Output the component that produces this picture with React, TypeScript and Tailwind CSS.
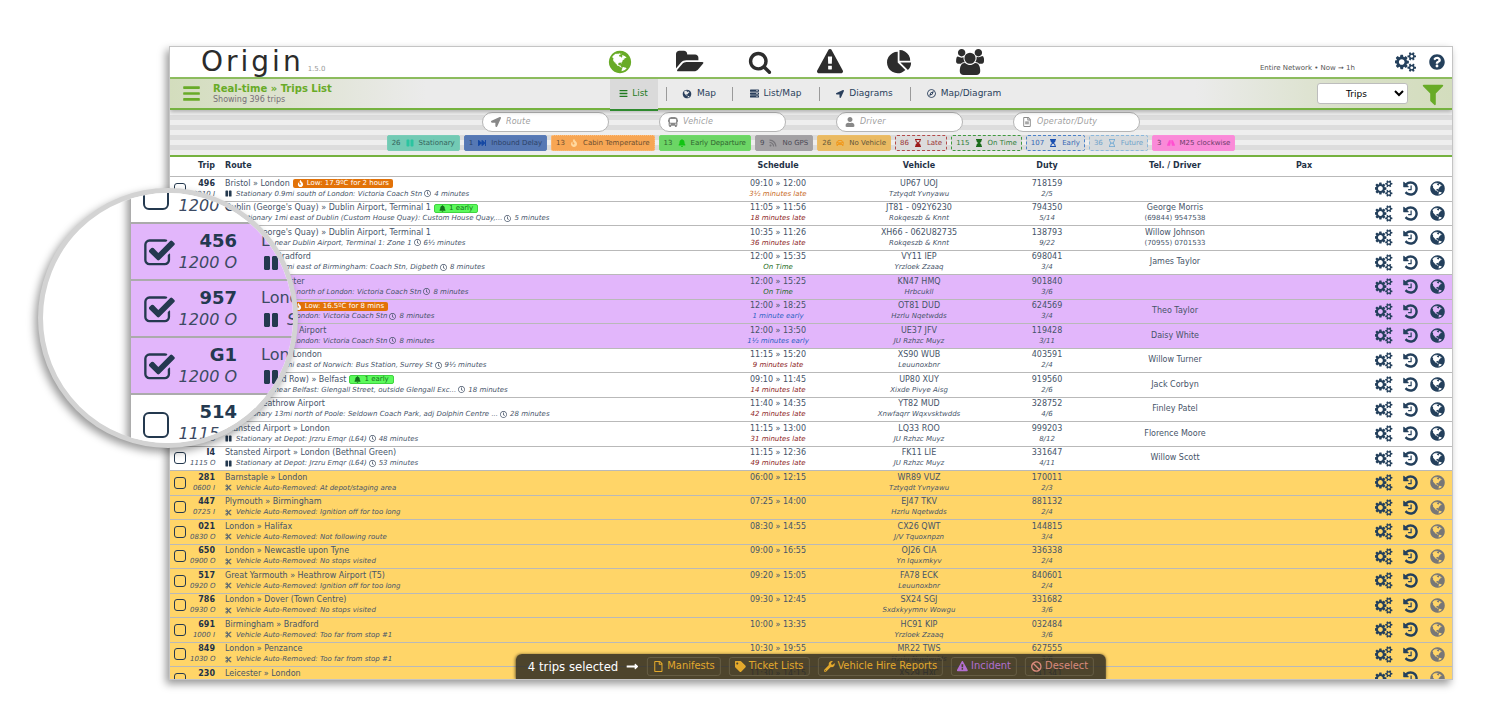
import React from "react";
import {
  FaBars, FaBan, FaBell, FaBus, FaCar, FaCut, FaFastForward, FaFire, FaHourglass, FaHourglassEnd,
  FaHourglassStart, FaLocationArrow, FaLongArrowAltRight, FaPause, FaQuestionCircle, FaRegClock,
  FaRegCompass, FaRegFile, FaRegFileAlt, FaRegHourglass, FaRoad, FaRss, FaServer, FaTag, FaUser, FaWrench,
} from "react-icons/fa";

const PATHS = {
  globe:
    "M896 128q209 0 385.500 103t279.500 279.500 103 385.500-103 385.500-279.500 279.500-385.500 103-385.500-103-279.500-279.500-103-385.500 103-385.500 279.500-279.500 385.500-103zm274 521q-2 1-9.500 9.500t-13.500 9.500q2 0 4.500-5t5-11 3.500-7q6-7 22-15 14-6 52-12 34-8 51 11-2-2 9.500-13t14.500-12q3-2 15-4.500t15-7.500l2-22q-12 1-17.500-7t-6.500-21q0 2-6 8 0-7-4.500-8t-11.500 1-9 1q-10-3-15-7.500t-8-16.500-4-15q-2-5-9.500-11t-9.500-10q-1-2-2.500-5.500t-3-6.500-4-5.500-5.500-2.500-7 5-7.500 10-4.500 5q-3-2-6-1.500t-4.500 1-4.500 3-5 3.500q-3 2-8.500 3t-8.500 2q15-5-1-11-10-4-16-3 9-4 7.500-12t-8.500-14h5q-1-4-8.500-8.500t-17.500-8.500-13-6q-8-5-34-9.500t-33-.5q-5 6-4.500 10.500t4 14 3.500 12.500q1 6-5.500 13t-6.500 12q0 7 14 15.500t10 21.500q-3 8-16 16t-16 12q-5 8-1.500 18.500t10.500 16.500q2 2 1.500 4t-3.500 4.500-5.500 4-6.500 3.500l-3 2q-11 5-20.500-6t-13.500-26q-7-25-16-30-23-8-29 1-5-13-41-26-25-9-58-4 6-1 0-15-7-15-19-12 3-6 4-17.500t1-13.500q3-13 12-23 1-1 7-8.500t9.500-13.500.5-6q35 4 50-11 5-5 11.500-17t10.500-17q9-6 14-5.500t14.500 5.500 14.500 5q14 1 15.500-11t-7.500-20q12 1 3-17-4-7-8-9-12-4-27 5-8 4 2 8-1-1-9.500 10.500t-16.500 17.500-16-5q-1-1-5.500-13.500t-9.500-13.500q-8 0-16 15 3-8-11-15t-24-8q19-12-8-27-7-4-20.500-5t-19.500 4q-5 7-5.500 11.500t5 8 10.500 5.500 11.500 4 8.500 3q14 10 8 14-2 1-8.500 3.500t-11.500 4.500-6 4q-3 4 0 14t-2 14q-5-5-9-17.500t-7-16.500q7 9-25 6l-10-1q-4 0-16 2t-20.500 1-13.500-8q-4-8 0-20 1-4 4-2-4-3-11-9.500t-10-8.500q-46 15-94 41 6 1 12-1 5-2 13-6.500t10-5.500q34-14 42-7l5-5q14 16 20 25-7-4-30-1-20 6-22 12 7 12 5 18-4-3-11.500-10t-14.500-11-15-5q-16 0-22 1-146 80-235 222 7 7 12 8 4 1 5 9t2.500 11 11.500-3q9 8 3 19 1-1 44 27 19 17 21 21 3 11-10 18-1-2-9-9t-9-4q-3 5 .5 18.500t10.500 12.500q-7 0-9.500 16t-2.500 35.500-1 23.500l2 1q-3 12 5.500 34.500t21.500 19.500q-13 3 20 43 6 8 8 9 3 2 12 7.500t15 10 10 10.500q4 5 10 22.500t14 23.500q-2 6 9.500 20t10.500 23q-1 0-2.500 1t-2.500 1q3 7 15.500 14t15.500 13q1 3 2 10t3 11 8 2q2-20-24-62-15-25-17-29-3-5-5.500-15.500t-4.500-14.500q2 0 6 1.500t8.500 3.500 7.500 4 2 3q-3 7 2 17.500t12 18.500 17 19 12 13q6 6 14 19.500t0 13.500q9 0 20 10.500t17 19.500q5 8 8 26t5 24q2 7 8.500 13.500t12.500 9.500l16 8 13 7q5 2 18.500 10.500t21.500 11.500q10 4 16 4t14.500-2.500 13.500-3.500q15-2 29 15t21 21q36 19 55 11-2 1 .5 7.500t8 15.500 9 14.500 5.500 8.500q5 6 18 15t18 15q6-4 7-9-3 8 7 20t18 10q14-3 14-32-31 15-49-18 0-1-2.500-5.500t-4-8.500-2.500-8.500 0-7.500 5-3q9 0 10-3.500t-2-12.500-4-13q-1-8-11-20t-12-15q-5 9-16 8t-16-9q0 1-1.500 5.500t-1.500 6.500q-13 0-15-1 1-3 2.500-17.500t3.500-22.500q1-4 5.500-12t7.500-14.500 4-12.500-4.500-9.500-17.500-2.500q-19 1-26 20-1 3-3 10.500t-5 11.500-9 7q-7 3-24 2t-24-5q-13-8-22.500-29t-9.500-37q0-10 2.500-26.500t3-25-5.500-24.500q3-2 9-9.500t10-10.500q2-1 4.500-1.500t4.500 0 4-1.500 3-6q-1-1-4-3-3-3-4-3 7 3 28.500-1.500t27.500 1.500q15 11 22-2 0-1-2.500-9.500t-.5-13.500q5 27 29 9 3 3 15.500 5t17.500 5q3 2 7 5.500t5.500 4.500 5-.5 8.500-6.500q10 14 12 24 11 40 19 44 7 3 11 2t4.500-9.500 0-14-1.500-12.500l-1-8v-18l-1-8q-15-3-18.500-12t1.500-18.500 15-18.500q1-1 8-3.500t15.500-6.500 12.500-8q21-19 15-35 7 0 11-9-1 0-5-3t-7.500-5-4.500-2q9-5 2-16 5-3 7.500-11t7.500-10q9 12 21 2 8-8 1-16 5-7 20.500-10.500t18.500-9.500q7 2 8-2t1-12 3-12q4-5 15-9t13-5l17-11q3-4 0-4 18 2 31-11 10-11-6-20 3-6-3-9.500t-15-5.500q3-1 11.500-.5t10.500-1.500q15-10-7-16-17-5-43 12zm-163 877q206-36 351-189-3-3-12.500-4.500t-12.500-3.500q-18-7-24-8 1-7-2.500-13t-8-9-12.500-8-11-7q-2-2-7-6t-7-5.500-7.500-4.500-8.500-2-10 1l-3 1q-3 1-5.500 2.500t-5.500 3-4 3 0 2.500q-21-17-36-22-5-1-11-5.500t-10.500-7-10-1.500-11.500 7q-5 5-6 15t-2 13q-7-5 0-17.500t2-18.500q-3-6-10.500-4.500t-12 4.500-11.500 8.500-9 6.500-8.500 5.500-8.500 7.500q-3 4-6 12t-5 11q-2-4-11.500-6.500t-9.500-5.500q2 10 4 35t5 38q7 31-12 48-27 25-29 40-4 22 12 26 0 7-8 20.500t-7 21.500q0 6 2 16z",
  cogs:
    "M832 896q0-106-75-181t-181-75-181 75-75 181 75 181 181 75 181-75 75-181zm768 512q0-52-38-90t-90-38-90 38-38 90q0 53 37.500 90.500t90.500 37.500 90.500-37.500 37.500-90.500zm0-1024q0-52-38-90t-90-38-90 38-38 90q0 53 37.500 90.500t90.500 37.500 90.500-37.500 37.500-90.500zm-384 421v185q0 10-7 19.500t-16 10.500l-155 24q-11 35-32 76 34 48 90 115 7 11 7 20 0 12-7 19-23 30-82.500 89.500t-78.500 59.500q-11 0-21-7l-115-90q-37 19-77 31-11 108-23 155-7 24-30 24h-186q-11 0-20-7.500t-10-17.500l-23-153q-34-10-75-31l-118 89q-7 7-20 7-11 0-21-8-144-133-144-160 0-9 7-19 10-14 41-53t47-61q-23-44-35-82l-152-24q-10-1-17-9.500t-7-19.500v-185q0-10 7-19.500t16-10.500l155-24q11-35 32-76-34-48-90-115-7-11-7-20 0-12 7-20 22-30 82-89t79-59q11 0 21 7l115 90q34-18 77-32 11-108 23-154 7-24 30-24h186q11 0 20 7.500t10 17.500l23 153q34 10 75 31l118-89q8-7 20-7 11 0 21 8 144 133 144 160 0 8-7 19-12 16-42 54t-45 60q23 48 34 82l152 23q10 2 17 10.500t7 19.500zm640 533v140q0 16-149 31-12 27-30 52 51 113 51 138 0 4-4 7-122 71-124 71-8 0-46-47t-52-68q-20 2-30 2t-30-2q-14 21-52 68t-46 47q-2 0-124-71-4-3-4-7 0-25 51-138-18-25-30-52-149-15-149-31v-140q0-16 149-31 13-29 30-52-51-113-51-138 0-4 4-7 4-2 35-20t59-34 30-16q8 0 46 46.500t52 67.500q20-2 30-2t30 2q51-71 92-112l6-2q4 0 124 70 4 3 4 7 0 25-51 138 17 23 30 52 149 15 149 31zm0-1024v140q0 16-149 31-12 27-30 52 51 113 51 138 0 4-4 7-122 71-124 71-8 0-46-47t-52-68q-20 2-30 2t-30-2q-14 21-52 68t-46 47q-2 0-124-71-4-3-4-7 0-25 51-138-18-25-30-52-149-15-149-31v-140q0-16 149-31 13-29 30-52-51-113-51-138 0-4 4-7 4-2 35-20t59-34 30-16q8 0 46 46.500t52 67.500q20-2 30-2t30 2q51-71 92-112l6-2q4 0 124 70 4 3 4 7 0 25-51 138 17 23 30 52 149 15 149 31z",
  history:
    "M1664 896q0 156-61 298t-164 245-245 164-298 61q-172 0-327-72.500t-264-204.500q-7-10-6.500-22.500t8.500-20.500l137-138q10-9 25-9 16 2 23 12 73 95 179 147t225 52q104 0 198.500-40.500t163.500-109.500 109.500-163.500 40.500-198.500-40.500-198.500-109.500-163.500-163.500-109.500-198.500-40.500q-98 0-188 35.500t-160 101.500l137 138q31 30 14 69-17 40-59 40h-448q-26 0-45-19t-19-45v-448q0-42 40-59 39-17 69 14l130 129q107-101 244.500-156.500t284.500-55.500q156 0 298 61t245 164 164 245 61 298zm-640-288v448q0 14-9 23t-23 9h-320q-14 0-23-9t-9-23v-64q0-14 9-23t23-9h224v-352q0-14 9-23t23-9h64q14 0 23 9t9 23z",
  folder:
    "M1879 952q0 31-31 66l-336 396q-43 51-120.500 86.500t-143.500 35.500h-1088q-34 0-60.500-13t-26.500-43q0-31 31-66l336-396q43-51 120.500-86.500t143.500-35.500h1088q34 0 60.500 13t26.500 43zm-343-344v160h-832q-94 0-197 47.500t-164 119.500l-337 396-5 6q0-4-.5-12.500t-.5-12.500v-960q0-92 66-158t158-66h320q92 0 158 66t66 158v32h544q92 0 158 66t66 158z",
  search:
    "M1216 832q0-185-131.500-316.500t-316.500-131.500-316.500 131.500-131.500 316.500 131.500 316.500 316.500 131.500 316.500-131.500 131.500-316.500zm512 832q0 52-38 90t-90 38q-54 0-90-38l-343-342q-179 124-399 124-143 0-273.500-55.500t-225-150-150-225-55.500-273.500 55.500-273.500 150-225 225-150 273.500-55.500 273.500 55.500 225 150 150 225 55.500 273.500q0 220-124 399l343 343q37 37 37 90z",
  warning:
    "M1024 1375v-190q0-14-9.500-23.500t-22.500-9.500h-192q-13 0-22.500 9.500t-9.500 23.500v190q0 14 9.500 23.500t22.500 9.500h192q13 0 22.500-9.500t9.500-23.500zm-2-374l18-459q0-12-10-19-13-11-24-11h-220q-11 0-24 11-10 7-10 21l17 457q0 10 10 16.500t24 6.500h185q14 0 23.500-6.500t10.500-16.500zm-14-934l768 1408q35 63-2 126-17 29-46.500 46t-63.500 17h-1536q-34 0-63.500-17t-46.500-46q-37-63-2-126l768-1408q17-31 47-49t65-18 65 18 47 49z",
  pie:
    "M768 890l546 546q-106 108-247.500 168t-298.500 60q-209 0-385.500-103t-279.500-279.500-103-385.500 103-385.500 279.500-279.500 385.500-103v762zm187 6h773q0 157-60 298.500t-168 247.500zm709-128h-768v-768q209 0 385.500 103t279.500 279.500 103 385.500z",
  users:
    "M593 896q-162 5-265 128h-134q-82 0-138-40.500t-56-118.500q0-353 124-353 6 0 43.500 21t97.500 42.500 119 21.500q67 0 133-23-5 37-5 66 0 159 93 293zm1071 637q0 120-73 189.500t-194 69.500h-874q-121 0-194-69.500t-73-189.500q0-53 3.500-103.500t14-109 26.500-108.500 43-97.500 62-81 85.500-53.500 111.500-20q10 0 43 21.500t73 48 107 48 135 21.500 135-21.500 107-48 73-48 43-21.500q61 0 111.500 20t85.500 53.500 62 81 43 97.500 26.500 108.500 14 109 3.500 103.500zm-1024-1277q0 106-75 181t-181 75-181-75-75-181 75-181 181-75 181 75 75 181zm704 384q0 159-112.500 271.500t-271.500 112.500-271.500-112.500-112.500-271.500 112.500-271.500 271.500-112.500 271.500 112.500 112.500 271.500zm576 225q0 78-56 118.500t-138 40.500h-134q-103-123-265-128 93-134 93-293 0-29-5-66 66 23 133 23 59 0 119-21.500t97.500-42.500 43.500-21q124 0 124 353zm-128-609q0 106-75 181t-181 75-181-75-75-181 75-181 181-75 181 75 75 181z",
  filter:
    "M1595 295q17 41-14 70l-493 493v742q0 42-39 59-13 5-25 5-27 0-45-19l-256-256q-19-19-19-45v-486l-493-493q-31-29-14-70 17-39 59-39h1280q42 0 59 39z",
  checked:
    "M1472 930v318q0 119-84.500 203.500t-203.500 84.500h-832q-119 0-203.500-84.500t-84.500-203.500v-832q0-119 84.500-203.500t203.500-84.500h832q63 0 117 25 15 7 18 23 3 17-9 29l-49 49q-10 10-23 10-3 0-9-2-23-6-45-6h-832q-66 0-113 47t-47 113v832q0 66 47 113t113 47h832q66 0 113-47t47-113v-254q0-13 9-22l64-64q10-10 23-10 6 0 12 3 20 8 20 29zm231-489l-814 814q-24 24-57 24t-57-24l-430-430q-24-24-24-57t24-57l110-110q24-24 57-24t57 24l263 263 647-647q24-24 57-24t57 24l110 110q24 24 24 57t-24 57z",
};

type IconName = keyof typeof PATHS;

function Icon({ name, wide, className }: { name: IconName; wide?: boolean; className: string }) {
  return (
    <svg viewBox={wide ? "0 0 1920 1792" : "0 0 1792 1792"} fill="currentColor" aria-hidden="true" className={className}>
      <path d={PATHS[name]} />
    </svg>
  );
}

type Kind = "plain" | "picked" | "removed";
type Row = {
  kind: Kind;
  trip: string;
  dep: string;
  route: string;
  low?: string;
  early?: string;
  note: string;
  wait?: string;
  time: string;
  status?: string;
  tone?: string;
  reg: string;
  operator: string;
  duty: string;
  seq: string;
  driver?: string;
  tel?: string;
};

const LATE = "text-[#8b1a1a]";
const ONTIME = "text-[#1c6b1c]";
const EARLY = "text-[#2a62c4]";

const ROWS: Row[] = [
  { kind: "plain", trip: "496", dep: "0910 I", route: "Bristol » London", low: "Low: 17.9ºC for 2 hours", note: "Stationary 0.9mi south of London: Victoria Coach Stn", wait: "4 minutes", time: "09:10 » 12:00", status: "3½ minutes late", tone: "text-[#c8691c]", reg: "UP67 UOJ", operator: "Tztyqdt Yvnyawu", duty: "718159", seq: "2/5" },
  { kind: "plain", trip: "784", dep: "1105 O", route: "Dublin (George's Quay) » Dublin Airport, Terminal 1", early: "1 early", note: "Stationary 1mi east of Dublin (Custom House Quay): Custom House Quay,...", wait: "5 minutes", time: "11:05 » 11:56", status: "18 minutes late", tone: LATE, reg: "JT81 - 092Y6230", operator: "Rokqeszb & Knnt", duty: "794350", seq: "5/14", driver: "George Morris", tel: "(69844) 9547538" },
  { kind: "plain", trip: "784", dep: "1035 O", route: "Dublin (George's Quay) » Dublin Airport, Terminal 1", note: "Stationary near Dublin Airport, Terminal 1: Zone 1", wait: "6½ minutes", time: "10:35 » 11:26", status: "36 minutes late", tone: LATE, reg: "XH66 - 062U82735", operator: "Rokqeszb & Knnt", duty: "138793", seq: "9/22", driver: "Willow Johnson", tel: "(70955) 0701533" },
  { kind: "plain", trip: "310", dep: "1200 O", route: "Newcastle » Bradford", note: "Stationary 0.5mi east of Birmingham: Coach Stn, Digbeth", wait: "8 minutes", time: "12:00 » 15:35", status: "On Time", tone: ONTIME, reg: "VY11 IEP", operator: "Yrzloek Zzaaq", duty: "698041", seq: "3/4", driver: "James Taylor" },
  { kind: "picked", trip: "456", dep: "1200 O", route: "London » Worcester", note: "Stationary 0.9mi north of London: Victoria Coach Stn", wait: "8 minutes", time: "12:00 » 15:25", status: "On Time", tone: ONTIME, reg: "KN47 HMQ", operator: "Hrbcukll", duty: "901840", seq: "3/6" },
  { kind: "picked", trip: "957", dep: "1200 O", route: "London » Leeds", low: "Low: 16.5ºC for 8 mins", note: "Stationary near London: Victoria Coach Stn", wait: "8 minutes", time: "12:00 » 18:25", status: "1 minute early", tone: EARLY, reg: "OT81 DUD", operator: "Hzrlu Nqetwdds", duty: "624569", seq: "3/4", driver: "Theo Taylor" },
  { kind: "picked", trip: "G1", dep: "1200 O", route: "London » Gatwick Airport", note: "Stationary near London: Victoria Coach Stn", wait: "8 minutes", time: "12:00 » 13:50", status: "1½ minutes early", tone: EARLY, reg: "UE37 JFV", operator: "JU Rzhzc Muyz", duty: "119428", seq: "3/11", driver: "Daisy White" },
  { kind: "plain", trip: "514", dep: "1115 O", route: "Norwich (UEA) » London", note: "Stationary 0.5mi east of Norwich: Bus Station, Surrey St", wait: "9½ minutes", time: "11:15 » 15:20", status: "9 minutes late", tone: LATE, reg: "XS90 WUB", operator: "Leuunoxbnr", duty: "403591", seq: "2/4", driver: "Willow Turner" },
  { kind: "plain", trip: "X1", dep: "0910 O", route: "London (Strand Row) » Belfast", early: "1 early", note: "Stationary near Belfast: Glengall Street, outside Glengall Exc...", wait: "18 minutes", time: "09:10 » 11:45", status: "14 minutes late", tone: LATE, reg: "UP80 XUY", operator: "Xixde Pivye Aisg", duty: "919560", seq: "2/6", driver: "Jack Corbyn" },
  { kind: "plain", trip: "205", dep: "1140 O", route: "Poole » Heathrow Airport", note: "Stationary 13mi north of Poole: Seldown Coach Park, adj Dolphin Centre ...", wait: "28 minutes", time: "11:40 » 14:35", status: "42 minutes late", tone: LATE, reg: "YT82 MUD", operator: "Xnwfaqrr Wqxvsktwdds", duty: "328752", seq: "4/6", driver: "Finley Patel" },
  { kind: "plain", trip: "A6", dep: "1115 O", route: "Stansted Airport » London", note: "Stationary at Depot: Jrzru Emqr (L64)", wait: "48 minutes", time: "11:15 » 13:00", status: "31 minutes late", tone: LATE, reg: "LQ33 ROO", operator: "JU Rzhzc Muyz", duty: "999203", seq: "8/12", driver: "Florence Moore" },
  { kind: "plain", trip: "I4", dep: "1115 O", route: "Stansted Airport » London (Bethnal Green)", note: "Stationary at Depot: Jrzru Emqr (L64)", wait: "53 minutes", time: "11:15 » 12:36", status: "49 minutes late", tone: LATE, reg: "FK11 LIE", operator: "JU Rzhzc Muyz", duty: "331647", seq: "4/11", driver: "Willow Scott" },
  { kind: "removed", trip: "281", dep: "0600 I", route: "Barnstaple » London", note: "Vehicle Auto-Removed: At depot/staging area", time: "06:00 » 12:15", reg: "WR89 VUZ", operator: "Tztyqdt Yvnyawu", duty: "170011", seq: "2/3" },
  { kind: "removed", trip: "447", dep: "0725 I", route: "Plymouth » Birmingham", note: "Vehicle Auto-Removed: Ignition off for too long", time: "07:25 » 14:00", reg: "EJ47 TKV", operator: "Hzrlu Nqetwdds", duty: "881132", seq: "2/4" },
  { kind: "removed", trip: "021", dep: "0830 O", route: "London » Halifax", note: "Vehicle Auto-Removed: Not following route", time: "08:30 » 14:55", reg: "CX26 QWT", operator: "J/V Tquoxnpzn", duty: "144815", seq: "3/4" },
  { kind: "removed", trip: "650", dep: "0900 O", route: "London » Newcastle upon Tyne", note: "Vehicle Auto-Removed: No stops visited", time: "09:00 » 16:55", reg: "OJ26 CIA", operator: "Yn Iquxmkyv", duty: "336338", seq: "2/4" },
  { kind: "removed", trip: "517", dep: "0920 O", route: "Great Yarmouth » Heathrow Airport (T5)", note: "Vehicle Auto-Removed: Ignition off for too long", time: "09:20 » 15:05", reg: "FA78 ECK", operator: "Leuunoxbnr", duty: "840601", seq: "2/4" },
  { kind: "removed", trip: "786", dep: "0930 O", route: "London » Dover (Town Centre)", note: "Vehicle Auto-Removed: No stops visited", time: "09:30 » 12:45", reg: "SX24 SGJ", operator: "Sxdxkyymnv Wowgu", duty: "331682", seq: "3/6" },
  { kind: "removed", trip: "691", dep: "1000 I", route: "Birmingham » Bradford", note: "Vehicle Auto-Removed: Too far from stop #1", time: "10:00 » 13:35", reg: "HC91 KIP", operator: "Yrzloek Zzaaq", duty: "032484", seq: "3/6" },
  { kind: "removed", trip: "849", dep: "1030 O", route: "London » Penzance", note: "Vehicle Auto-Removed: Too far from stop #1", time: "10:30 » 19:55", reg: "MR22 TWS", operator: "Hzrlu Nqetwdds", duty: "627555", seq: "3/6" },
  { kind: "removed", trip: "230", dep: "1130 O", route: "Leicester » London", note: "Vehicle Auto-Removed: No stops visited", time: "11:30 » 14:15", reg: "XS29 HXC", operator: "JU Rzhzc Muyz", duty: "341341", seq: "2/4" },
];

const ROW_BG: Record<Kind, string> = { plain: "bg-white", picked: "bg-[#e2b6fb]", removed: "bg-[#ffd568]" };

function TripRow({ row }: { row: Row }) {
  return (
    <tr className={`border-t border-[#b9b9b9] odd:h-[25px] even:h-6 ${ROW_BG[row.kind]}`}>
      <td className="p-0 pl-1 align-middle">
        <input
          type="checkbox"
          defaultChecked={row.kind === "picked"}
          aria-label={`Select trip ${row.trip}`}
          className="block size-3 appearance-none rounded-[3px] border border-[#24394f]"
        />
      </td>
      <td className="overflow-visible p-0 pr-[5px] text-right">
        <div className="font-bold text-[#1f3247]">{row.trip}</div>
        <div className="text-[7px] italic">{row.dep}</div>
      </td>
      <td className="p-0 pl-[5px]">
        <div className="flex items-center gap-[3px]">
          {row.route}
          {row.low && (
            <span className="flex h-[9px] items-center gap-[3px] rounded-[2px] bg-[#e27208] px-1 text-[7px] leading-[9px] text-white">
              <FaFire />
              {row.low}
            </span>
          )}
          {row.early && (
            <span className="flex h-[9px] items-center gap-[3px] rounded-[2px] border border-[#3fd43f] bg-[#5cfa5c] px-1 text-[7px] leading-[9px] text-[#12701a]">
              <FaBell />
              {row.early}
            </span>
          )}
        </div>
        <div className="flex items-center gap-1 text-[7px] italic">
          {row.kind === "removed" ? <FaCut className="text-[#5f6a70]" /> : <FaPause className="text-[#24394f]" />}
          <span>{row.note}</span>
          {row.wait && (
            <span className="-ml-[2px] flex items-center gap-[3px]">
              <FaRegClock />
              {row.wait}
            </span>
          )}
        </div>
      </td>
      <td className="p-0 text-center">
        <div>{row.time}</div>
        <div className={`min-h-[10px] text-[7px] italic ${row.tone ?? ""}`}>{row.status}</div>
      </td>
      <td className="p-0 text-center">
        <div>{row.reg}</div>
        <div className="text-[7px] italic">{row.operator}</div>
      </td>
      <td className="p-0 text-center">
        <div>{row.duty}</div>
        <div className="text-[7px] italic">{row.seq}</div>
      </td>
      <td className="p-0 text-center">
        <div>{row.driver}</div>
        <div className="text-[7px]">{row.tel}</div>
      </td>
      <td className="p-0" />
      <td className="p-0 pr-[6px]">
        <div className="flex items-center justify-end text-[#24405c]">
          <button aria-label="Trip settings">
            <Icon name="cogs" wide className="h-[17px] w-[18px]" />
          </button>
          <button aria-label="Trip history" className="ml-[9px]">
            <Icon name="history" className="size-[17px]" />
          </button>
          <button aria-label="Show on map" className={row.kind === "removed" ? "ml-[10px] text-[#777777]" : "ml-[10px]"}>
            <Icon name="globe" className="size-[17px]" />
          </button>
        </div>
      </td>
    </tr>
  );
}

const SECTIONS: { name: IconName; label: string; className: string; wide?: boolean }[] = [
  { name: "globe", label: "Real-time", className: "size-[26px] text-[#68ab27]" },
  { name: "folder", label: "Files", className: "h-7 w-[28px]", wide: true },
  { name: "search", label: "Search", className: "size-[24px]" },
  { name: "warning", label: "Incidents", className: "size-[26px]" },
  { name: "pie", label: "Reports", className: "size-[25px]" },
  { name: "users", label: "People", className: "h-[26px] w-[28px]", wide: true },
];

const VIEWS = [
  { label: "Map", icon: <Icon name="globe" className="size-[10px]" />, width: "w-[66px]" },
  { label: "List/Map", icon: <FaServer />, width: "w-[87px]" },
  { label: "Diagrams", icon: <FaLocationArrow className="size-2" />, width: "w-[91px]" },
  { label: "Map/Diagram", icon: <FaRegCompass />, width: "w-[108px]" },
];

const SEARCHES = [
  { label: "Route", icon: <FaLocationArrow /> },
  { label: "Vehicle", icon: <FaBus /> },
  { label: "Driver", icon: <FaUser /> },
  { label: "Operator/Duty", icon: <FaRegFileAlt /> },
];

const CHIPS = [
  { n: 26, label: "Stationary", icon: <FaPause className="text-[#2bc4a0]" />, style: "border-solid border-[#7acdb8] bg-[#72cab4] text-[#35635c]" },
  { n: 1, label: "Inbound Delay", icon: <FaFastForward className="text-[#1548a4]" />, style: "border-solid border-[#5a7cb8] bg-[#5678b4] text-[#2c4268]" },
  { n: 13, label: "Cabin Temperature", icon: <FaFire className="text-[#ffd9a0]" />, style: "border-dotted border-[#ffc080] bg-[#f7a654] text-[#6b4e30]" },
  { n: 13, label: "Early Departure", icon: <FaBell className="text-[#12c412]" />, style: "border-solid border-[#6fda68] bg-[#6cd565] text-[#2f6330]" },
  { n: 9, label: "No GPS", icon: <FaRss className="text-[#77757a]" />, style: "border-solid border-[#a5a3a6] bg-[#a3a1a4] text-[#4a4a55]" },
  { n: 26, label: "No Vehicle", icon: <FaCar className="text-[#f09a20]" />, style: "border-solid border-[#ecbd68] bg-[#eaba62] text-[#62563a]" },
  { n: 86, label: "Late", icon: <FaHourglassEnd className="text-[#9b1c1c]" />, style: "border-dashed border-[#b34a4a] bg-[#dcdcdc] text-[#9b3434]" },
  { n: 115, label: "On Time", icon: <FaHourglass className="text-[#1c6b1c]" />, style: "border-dashed border-[#3f9a3f] bg-[#dcdcdc] text-[#2f7d38]" },
  { n: 107, label: "Early", icon: <FaHourglassStart className="text-[#1a4fb0]" />, style: "border-dashed border-[#4c82c8] bg-[#d8dce0] text-[#3667b4]" },
  { n: 36, label: "Future", icon: <FaRegHourglass className="text-[#6aa6d2]" />, style: "border-dashed border-[#8bb8dc] bg-[#d6dadd] text-[#6ea3ca]" },
  { n: 3, label: "M25 clockwise", icon: <FaRoad className="text-[#ff4fd0]" />, style: "border-solid border-[#fc8cda] bg-[#fa8ad8] text-[#6a3d68]" },
];

const ACTIONS = [
  { label: "Manifests", icon: <FaRegFile />, tone: "text-[#e3a92c]" },
  { label: "Ticket Lists", icon: <FaTag />, tone: "text-[#e3a92c]" },
  { label: "Vehicle Hire Reports", icon: <FaWrench />, tone: "text-[#e3a92c]" },
  { label: "Incident", icon: <Icon name="warning" className="size-[11px]" />, tone: "text-[#b26fd0]" },
  { label: "Deselect", icon: <FaBan />, tone: "text-[#d98a7c]" },
];

const LENS = [
  { trip: "784", dep: "1200 O", on: false, route: "" },
  { trip: "456", dep: "1200 O", on: true, route: "London" },
  { trip: "957", dep: "1200 O", on: true, route: "London" },
  { trip: "G1", dep: "1200 O", on: true, route: "London" },
  { trip: "514", dep: "1115 O", on: false, route: "" },
];

function Lens() {
  return (
    <div className="absolute top-[188px] left-[38px] size-[260px] overflow-hidden rounded-full border-[5px] border-[#d3d3d3] bg-white pl-[88px] shadow-[-3px_4px_8px_rgba(0,0,0,0.4)]">
      <div className="-mt-[26px] text-[16px] leading-[22px] text-[#3c4a63] shadow-[-4px_0_8px_rgba(0,0,0,0.4)]">
        {LENS.map((r) => (
          <div
            key={r.trip}
            className={`flex h-[57px] items-center border-b-2 border-[#ababab] pl-3 ${r.on ? "bg-[#e2b6fb]" : "bg-white"}`}
          >
            <label className="grid w-[31px] shrink-0 pt-1 text-[#24394f]">
              <input
                type="checkbox"
                defaultChecked={r.on}
                aria-label={`Trip ${r.trip} enlarged`}
                className="peer col-start-1 row-start-1 size-[26px] appearance-none self-center rounded-[6px] border-2 border-[#24394f] checked:opacity-0"
              />
              <Icon name="checked" className="invisible col-start-1 row-start-1 size-[33px] peer-checked:visible" />
            </label>
            <div className="w-[63px] shrink-0 text-right">
              <div className="text-[18px] font-bold text-[#24394f]">{r.trip}</div>
              <div className="whitespace-nowrap italic">{r.dep}</div>
            </div>
            {r.route && (
              <div className="ml-6 shrink-0">
                <div>{r.route}</div>
                <div className="flex h-[22px] items-center gap-2 pl-[2px] italic">
                  <FaPause className="text-[#24394f]" />
                  Stationary
                </div>
              </div>
            )}
          </div>
        ))}
      </div>
    </div>
  );
}

export default function App() {
  return (
    <div className="relative flex h-screen flex-col overflow-hidden bg-white pt-[46px] pr-[47px] pb-[35px] pl-[169px] font-['Verdana','DejaVu_Sans',sans-serif]">
      <main className="relative flex min-h-0 flex-1 flex-col overflow-hidden border border-[#c4c4c4] bg-white text-[#465469] shadow-[-3px_4px_8px_rgba(0,0,0,0.4)]">
        <header className="grid h-8 shrink-0 grid-cols-[1fr_auto_1fr] items-center border-b-2 border-[#8fc060]">
          <div className="flex items-baseline pl-[31px]">
            <span className="text-[28px] leading-[30px] tracking-[3px] text-[#2b2b2b]">Origin</span>
            <span className="ml-1 text-[7px] text-[#999999]">1.5.0</span>
          </div>
          <nav className="flex pr-[33px] text-[#2d2d2d]">
            {SECTIONS.map((s) => (
              <button key={s.label} aria-label={s.label} className="flex w-[70px] items-center justify-center">
                <Icon name={s.name} wide={s.wide} className={s.className} />
              </button>
            ))}
          </nav>
          <div className="flex items-center justify-end pr-[7px] text-[#24405c]">
            <span className="mt-3 mr-10 text-[7px] text-[#555555]">Entire Network • Now ➞ 1h</span>
            <button aria-label="Settings">
              <Icon name="cogs" wide className="h-5 w-[22px]" />
            </button>
            <button aria-label="Help" className="ml-3">
              <FaQuestionCircle className="size-4" />
            </button>
          </div>
        </header>

        <div className="relative z-10 grid h-[31px] shrink-0 grid-cols-[1fr_auto_1fr] border-b-2 border-[#75b23f] bg-[linear-gradient(90deg,#d3ddbd_0%,#dfe3d3_10%,#ebebeb_20%,#ebebeb_80%,#d9e0c8_92%,#d3ddbd_100%)] shadow-[0_2px_4px_rgba(0,0,0,0.25)]">
          <div className="flex items-center pl-3">
            <button aria-label="Menu">
              <FaBars className="size-[19px] text-[#68ab27]" />
            </button>
            <div className="ml-3">
              <h1 className="text-[10px] leading-[11px] font-bold text-[#68ab27]">Real-time » Trips List</h1>
              <p className="text-[8px] leading-[11px] text-[#776f77]">Showing 396 trips</p>
            </div>
          </div>
          <nav className="flex items-stretch pl-[5px] text-[9px] text-[#2a3f5c]">
            <a href="#list" className="mr-2 -mb-[2px] flex w-[48px] items-center justify-center gap-1 border-b-2 border-[#2f8a2f] bg-[#dadada] text-[#1f7a1f]">
              <FaBars />
              List
            </a>
            {VIEWS.map((v) => (
              <a key={v.label} href={`#${v.label}`} className={`my-2 flex items-center justify-center gap-[5px] border-l border-[#9a9a9a] ${v.width}`}>
                {v.icon}
                {v.label}
              </a>
            ))}
          </nav>
          <div className="flex items-center justify-end pr-[6px]">
            <select
              aria-label="View"
              defaultValue="Trips"
              className="h-[21px] w-[91px] rounded-[3px] border border-[#bdbdbd] bg-white text-center text-[9px] text-black"
            >
              <option>Trips</option>
            </select>
            <button aria-label="Filter" className="ml-3 text-[#68ab27]">
              <Icon name="filter" className="size-[26px]" />
            </button>
          </div>
        </div>

        <section className="flex h-[47px] shrink-0 flex-col items-center gap-[3px] border-b-2 border-[#75b23f] bg-[repeating-linear-gradient(180deg,#eeeeee_0px,#eeeeee_5px,#dcdcdc_5px,#dcdcdc_10px)] pt-[2px]">
          <div className="flex gap-[50px]">
            {SEARCHES.map((s) => (
              <label key={s.label} className="flex h-5 w-[127px] items-center gap-[5px] rounded-full border border-[#b5b5b5] bg-white pl-2 text-[10px] text-[#888888]">
                <span className="shrink-0">{s.icon}</span>
                <input
                  placeholder={s.label}
                  aria-label={s.label}
                  className="w-full min-w-0 bg-transparent text-[8px] tracking-wide italic outline-none placeholder:text-[#a0a0a0]"
                />
              </label>
            ))}
          </div>
          <div className="flex gap-1 text-[7px]">
            {CHIPS.map((c) => (
              <button key={c.label} className={`flex h-4 items-center gap-[5px] rounded-[2px] border px-1 whitespace-nowrap ${c.style}`}>
                <span>{c.n}</span>
                <span className="text-[8px]">{c.icon}</span>
                <span>{c.label}</span>
              </button>
            ))}
          </div>
        </section>

        <table className="w-full shrink-0 table-fixed border-collapse text-[8px] leading-[10px] whitespace-nowrap">
          <colgroup>
            <col className="w-5" />
            <col className="w-[30px]" />
            <col />
            <col className="w-[150px]" />
            <col className="w-[132px]" />
            <col className="w-[124px]" />
            <col className="w-[132px]" />
            <col className="w-[126px]" />
            <col className="w-[85px]" />
          </colgroup>
          <thead>
            <tr className="h-[19px] text-[#1f3247]">
              <th className="p-0" />
              <th className="p-0 pr-[5px] text-right">Trip</th>
              <th className="p-0 pl-[5px] text-left">Route</th>
              <th className="p-0">Schedule</th>
              <th className="p-0">Vehicle</th>
              <th className="p-0">Duty</th>
              <th className="p-0">Tel. / Driver</th>
              <th className="p-0">Pax</th>
              <th className="p-0" />
            </tr>
          </thead>
          <tbody>
            {ROWS.map((row, i) => (
              <TripRow key={i} row={row} />
            ))}
          </tbody>
        </table>

        <div className="absolute bottom-0 left-1/2 z-20 flex h-[25px] -translate-x-1/2 items-center gap-2 rounded-t-md bg-[#2e2a22]/85 px-3 font-['Tahoma','DejaVu_Sans_Condensed','DejaVu_Sans',sans-serif] text-[11px] whitespace-nowrap shadow-[0_0_3px_rgba(0,0,0,0.5)]">
          <span className="text-[13px] text-white">4 trips selected</span>
          <FaLongArrowAltRight className="text-[13px] text-white" />
          {ACTIONS.map((a) => (
            <button key={a.label} className={`flex h-[19px] items-center gap-[3px] rounded-[3px] border border-[#665d44] px-[5px] ${a.tone}`}>
              {a.icon}
              {a.label}
            </button>
          ))}
        </div>
      </main>
      <Lens />
    </div>
  );
}
